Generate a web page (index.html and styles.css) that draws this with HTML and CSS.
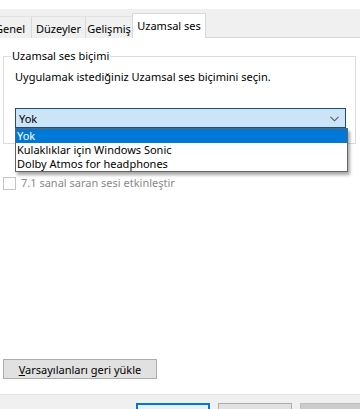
FILE: index.html
```html
<!DOCTYPE html>
<html lang="tr">
<head>
  <meta charset="UTF-8" />
  <meta name="viewport" content="width=device-width, initial-scale=1.0"/>
  <title>Uzamsal ses</title>
  <link rel="stylesheet" href="styles.css">
</head>
<body>
<div class="window">
  <div class="titlebar"></div>

  <!-- Tabs -->
  <div class="tabs">
    <div class="tab tab-genel">Genel</div>
    <div class="tab tab-duzey">Düzeyler</div>
    <div class="tab tab-gelis">Gelişmiş</div>
    <div class="tab tab-uzam active">Uzamsal ses</div>
  </div>

  <!-- Page -->
  <div class="page">
    <fieldset class="group">
      <legend>Uzamsal ses biçimi</legend>
      <p class="hint">Uygulamak istediğiniz Uzamsal ses biçimini seçin.</p>
      <div class="combo-wrap">
        <div class="combo">
          <span>Yok</span>
          <svg class="chevron" width="9" height="6" viewBox="0 0 9 6">
            <path d="M0.5 0.8 L4.5 4.8 L8.5 0.8" fill="none" stroke="#5a5a5a" stroke-width="1.1"/>
          </svg>
        </div>
        <ul class="dropdown">
          <li class="selected">Yok</li>
          <li>Kulaklıklar için Windows Sonic</li>
          <li>Dolby Atmos for headphones</li>
        </ul>
      </div>
    </fieldset>

    <label class="check disabled">
      <span class="box"></span>
      7.1 sanal saran sesi etkinleştir
    </label>

    <button class="btn reset"><u>V</u>arsayılanları geri yükle</button>
  </div>

  <!-- Dialog buttons -->
  <div class="footer">
    <button class="btn btn-ok">Tamam</button>
    <button class="btn">İptal</button>
    <button class="btn btn-off">Uygula</button>
  </div>
</div>
</body>
</html>
```

FILE: styles.css
```css
body {
  margin: 0;
  font-family: "Noto Sans", "Open Sans", sans-serif;
  font-size: 11px;
  color: #000;
  background: #fff;
}

.window {
  width: 360px;
  height: 409px;
  overflow: hidden;
  display: flex;
  flex-direction: column;
}

.titlebar {
  height: 9px;
  flex-shrink: 0;
  background: #fff;
}

/* Tabs */
.tabs {
  display: flex;
  align-items: flex-end;
  flex-shrink: 0;
  height: 28px;
  background: #f0f0f0;
  border-bottom: 1px solid #d9d9d9;
  margin-left: -12px;
}

.tab {
  height: 22px;
  line-height: 23px;
  text-align: center;
  border: 1px solid #e3e3e3;
  border-bottom: none;
  border-right: none;
  background: #f0f0f0;
  box-sizing: border-box;
  margin-bottom: -1px;
}

.tab-genel { width: 43px; }
.tab-duzey { width: 54px; border-left-color: #d9d9d9; }
.tab-gelis { width: 47px; border-left-color: #d9d9d9; }

.tab.active {
  width: 74px;
  height: 25px;
  background: #fff;
  border-color: #d9d9d9;
  border-right: 1px solid #d9d9d9;
  line-height: 24px;
}

/* Page */
.page {
  flex: 1;
  display: flex;
  flex-direction: column;
  background: #fff;
  padding: 0 4px 0 3px;
}

.group {
  margin: 10px 0 0;
  padding: 0 9px 0 11px;
  border: 1px solid #dcdcdc;
  height: 96px;
  box-sizing: border-box;
}

.group legend {
  padding: 0 1px;
  margin-left: -4px;
  line-height: 16px;
}

.hint {
  margin: 5px 0 0;
  line-height: 16px;
}

.combo-wrap {
  position: relative;
  margin-top: 23px;
}

.combo {
  display: flex;
  justify-content: space-between;
  align-items: center;
  height: 20px;
  box-sizing: border-box;
  padding: 0 6px 0 3px;
  background: #cce4f7;
  border: 1px solid #1f4f7a;
}

.chevron {
  margin-top: 1px;
}

.dropdown {
  position: absolute;
  top: 20px;
  left: 0;
  right: -2px;
  margin: 0;
  padding: 0;
  list-style: none;
  background: #fff;
  border: 1px solid #646464;
  box-shadow: 2px 3px 3px rgba(0, 0, 0, 0.35);
  z-index: 10;
}

.dropdown li {
  height: 14px;
  line-height: 14px;
  padding-left: 1px;
}

.dropdown li.selected {
  background: #0078d7;
  color: #fff;
}

/* Checkbox */
.check {
  display: flex;
  align-items: center;
  gap: 5px;
  margin-top: 32px;
  line-height: 14px;
}

.check .box {
  width: 11px;
  height: 11px;
  border: 1px solid #c4c4c4;
  background: #fff;
}

.check.disabled {
  color: #8a8a8a;
}

/* Buttons */
.btn {
  font-family: inherit;
  font-size: 11px;
  color: #000;
  background: #e1e1e1;
  border: 1px solid #adadad;
  height: 20px;
  padding: 0;
  box-sizing: border-box;
}

.reset {
  width: 154px;
  margin-top: auto;
  margin-bottom: 15px;
  flex-shrink: 0;
}

.footer {
  height: 6px;
  flex-shrink: 0;
  background: #f0f0f0;
  border-top: 1px solid #e3e3e3;
  display: flex;
  justify-content: flex-end;
  align-items: flex-start;
  gap: 8px;
  padding: 8px 0 0;
  margin-right: -14px;
}

.footer .btn {
  width: 74px;
  height: 23px;
  flex-shrink: 0;
}

.btn-ok {
  background: #e5f1fb;
  border: 2px solid #0078d7;
}

.btn-off {
  background: #cccccc;
  border-color: #bfbfbf;
  color: #838383;
}
```
